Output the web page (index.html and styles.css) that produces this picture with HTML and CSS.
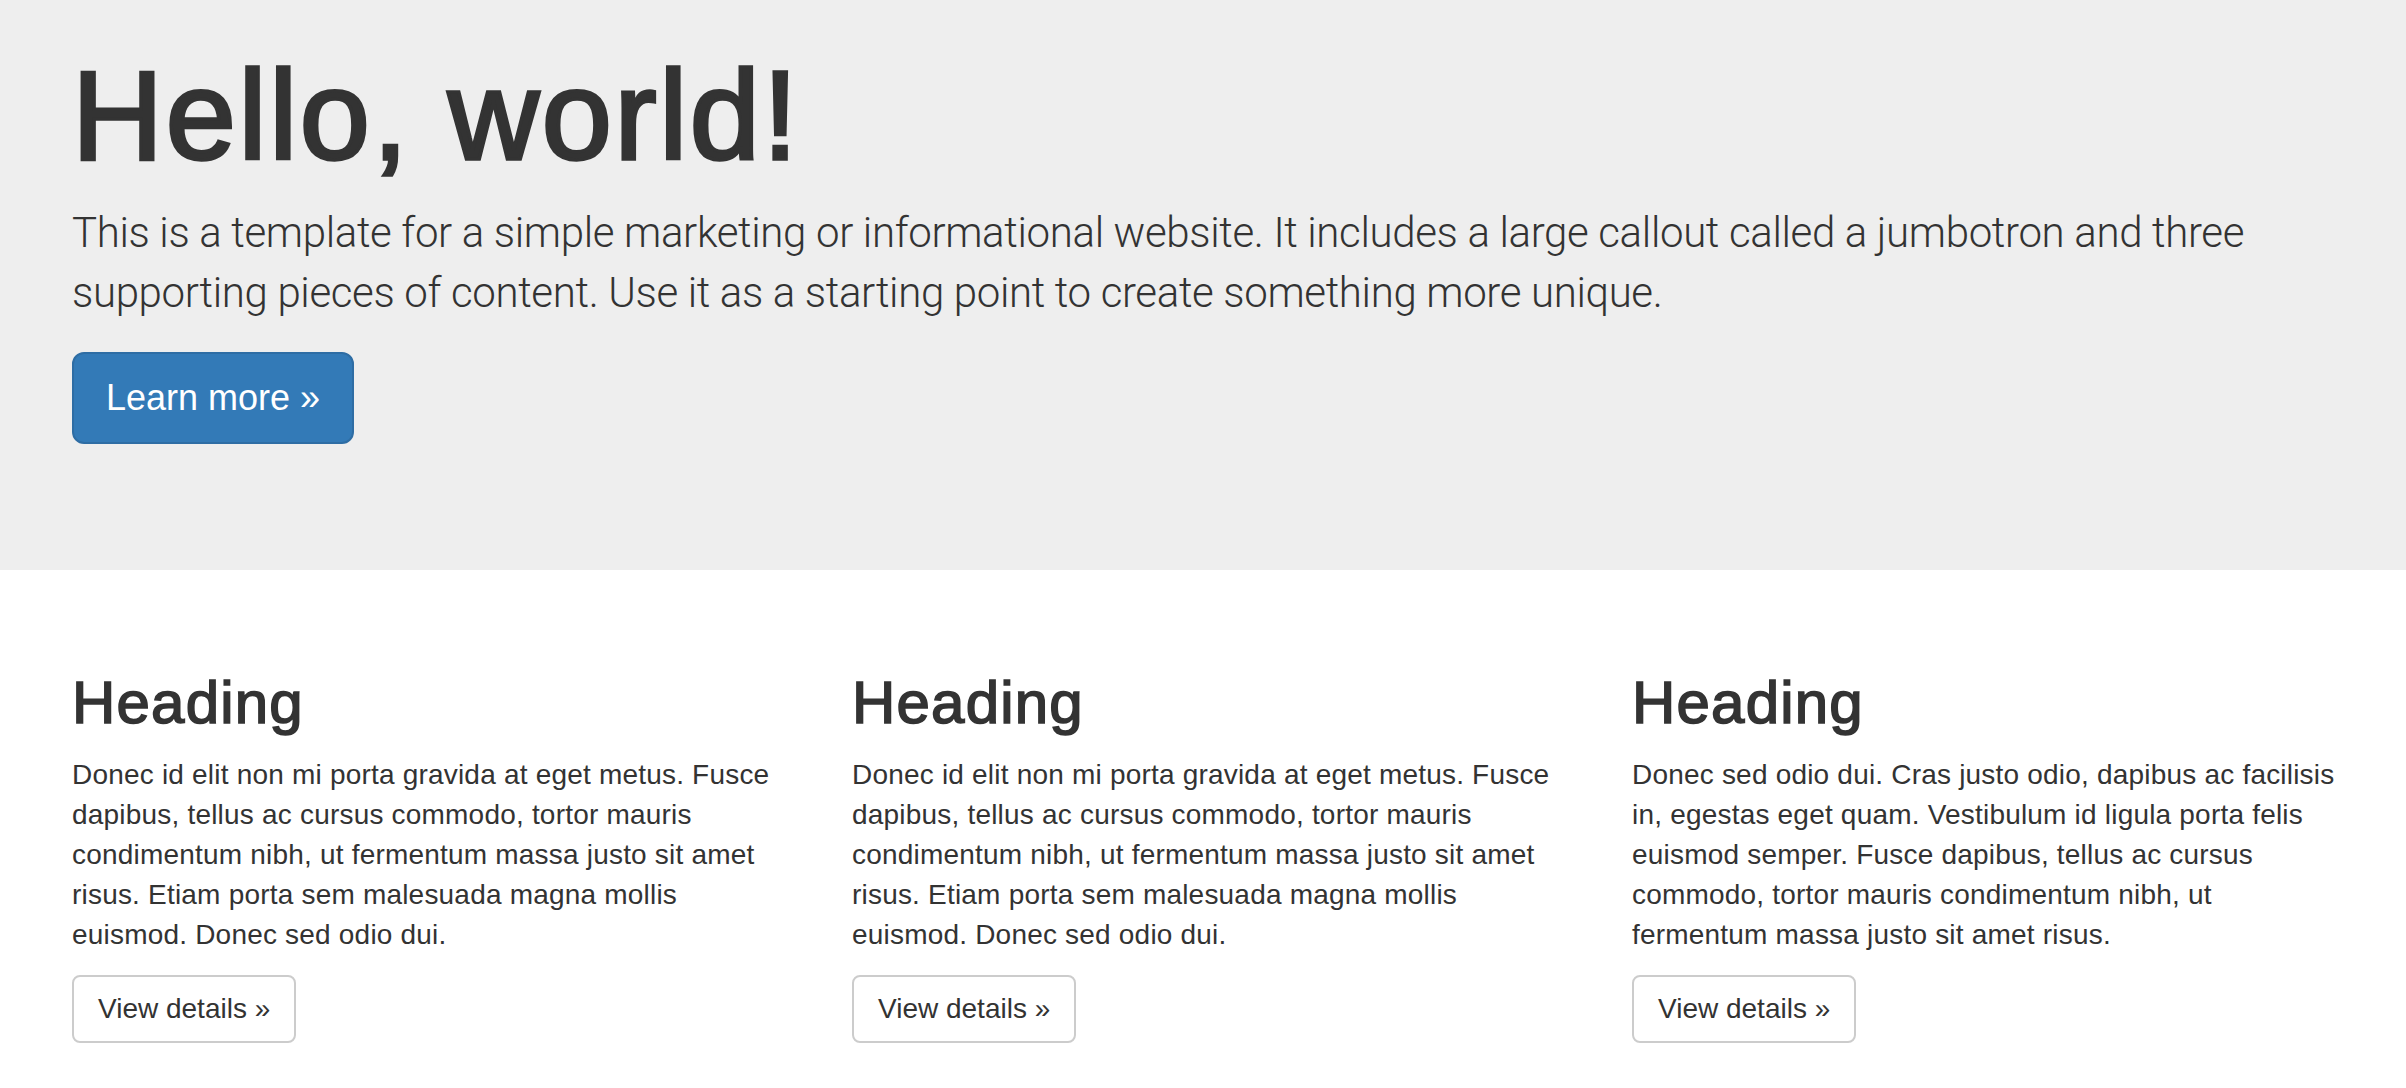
FILE: index.html
```html
<!DOCTYPE html>
<html lang="en">
<head>
<meta charset="utf-8">
<title>Jumbotron Template</title>
<link rel="stylesheet" href="styles.css">
</head>
<body>
  <div class="jumbotron">
    <div class="container">
      <h1 class="display">Hello, world!</h1>
      <p class="lead">This is a template for a simple marketing or informational website. It includes a large callout called a jumbotron and three supporting pieces of content. Use it as a starting point to create something more unique.</p>
      <div class="actions"><a class="btn btn-primary" href="#" role="button">Learn more &raquo;</a></div>
    </div>
  </div>

  <div class="container marketing">
    <div class="row">
      <div class="col">
        <h2 class="col-title">Heading</h2>
        <p class="col-text">Donec id elit non mi porta gravida at eget metus. Fusce dapibus, tellus ac cursus commodo, tortor mauris condimentum nibh, ut fermentum massa justo sit amet risus. Etiam porta sem malesuada magna mollis euismod. Donec sed odio dui.</p>
        <div class="col-actions"><a class="btn btn-default" href="#" role="button">View details &raquo;</a></div>
      </div>
      <div class="col">
        <h2 class="col-title">Heading</h2>
        <p class="col-text">Donec id elit non mi porta gravida at eget metus. Fusce dapibus, tellus ac cursus commodo, tortor mauris condimentum nibh, ut fermentum massa justo sit amet risus. Etiam porta sem malesuada magna mollis euismod. Donec sed odio dui.</p>
        <div class="col-actions"><a class="btn btn-default" href="#" role="button">View details &raquo;</a></div>
      </div>
      <div class="col">
        <h2 class="col-title">Heading</h2>
        <p class="col-text">Donec sed odio dui. Cras justo odio, dapibus ac facilisis in, egestas eget quam. Vestibulum id ligula porta felis euismod semper. Fusce dapibus, tellus ac cursus commodo, tortor mauris condimentum nibh, ut fermentum massa justo sit amet risus.</p>
        <div class="col-actions"><a class="btn btn-default" href="#" role="button">View details &raquo;</a></div>
      </div>
    </div>
  </div>
</body>
</html>
```

FILE: styles.css
```css
html, body {
  margin: 0;
  padding: 0;
}

body {
  font-family: "Liberation Sans", Helvetica, Arial, sans-serif;
  font-size: 28px;
  line-height: 40px;
  color: #333;
  background: #fff;
}

.container {
  width: 2280px;
  margin-left: 72px;
}

.jumbotron {
  background: #eee;
  padding: 47px 0 96px;
}

.display {
  margin: 0;
  font-size: 126px;
  line-height: 138.6px;
  font-weight: normal;
  letter-spacing: 2.7px;
  -webkit-text-stroke: 3.5px #333;
  color: #333;
}

.lead {
  margin: 17px 0 29px;
  font-family: Roboto, "Liberation Sans", sans-serif;
  font-size: 42px;
  line-height: 60px;
  font-weight: 300;
  letter-spacing: -0.35px;
}

.actions {
  display: flex;
  margin: 0 0 30px;
}

.btn {
  display: inline-block;
  text-decoration: none;
  border: 2px solid transparent;
  white-space: nowrap;
}

.btn-primary {
  font-size: 36px;
  line-height: 48px;
  padding: 20px 32px;
  border-radius: 12px;
  color: #fff;
  background: #337ab7;
  border-color: #2e6da4;
}

.marketing {
  padding-top: 100px;
}

.row {
  display: grid;
  grid-template-columns: repeat(3, 720px);
  column-gap: 60px;
}

.col-title {
  margin: 0 0 19px;
  font-size: 60px;
  line-height: 66px;
  font-weight: normal;
  letter-spacing: 1.2px;
  -webkit-text-stroke: 1.6px #333;
}

.col-text {
  margin: 0 0 20px;
  letter-spacing: 0.2px;
}

.col-actions {
  display: flex;
}

.btn-default {
  font-size: 28px;
  line-height: 40px;
  padding: 12px 24px;
  border-radius: 8px;
  color: #333;
  background: #fff;
  border-color: #ccc;
}
```
